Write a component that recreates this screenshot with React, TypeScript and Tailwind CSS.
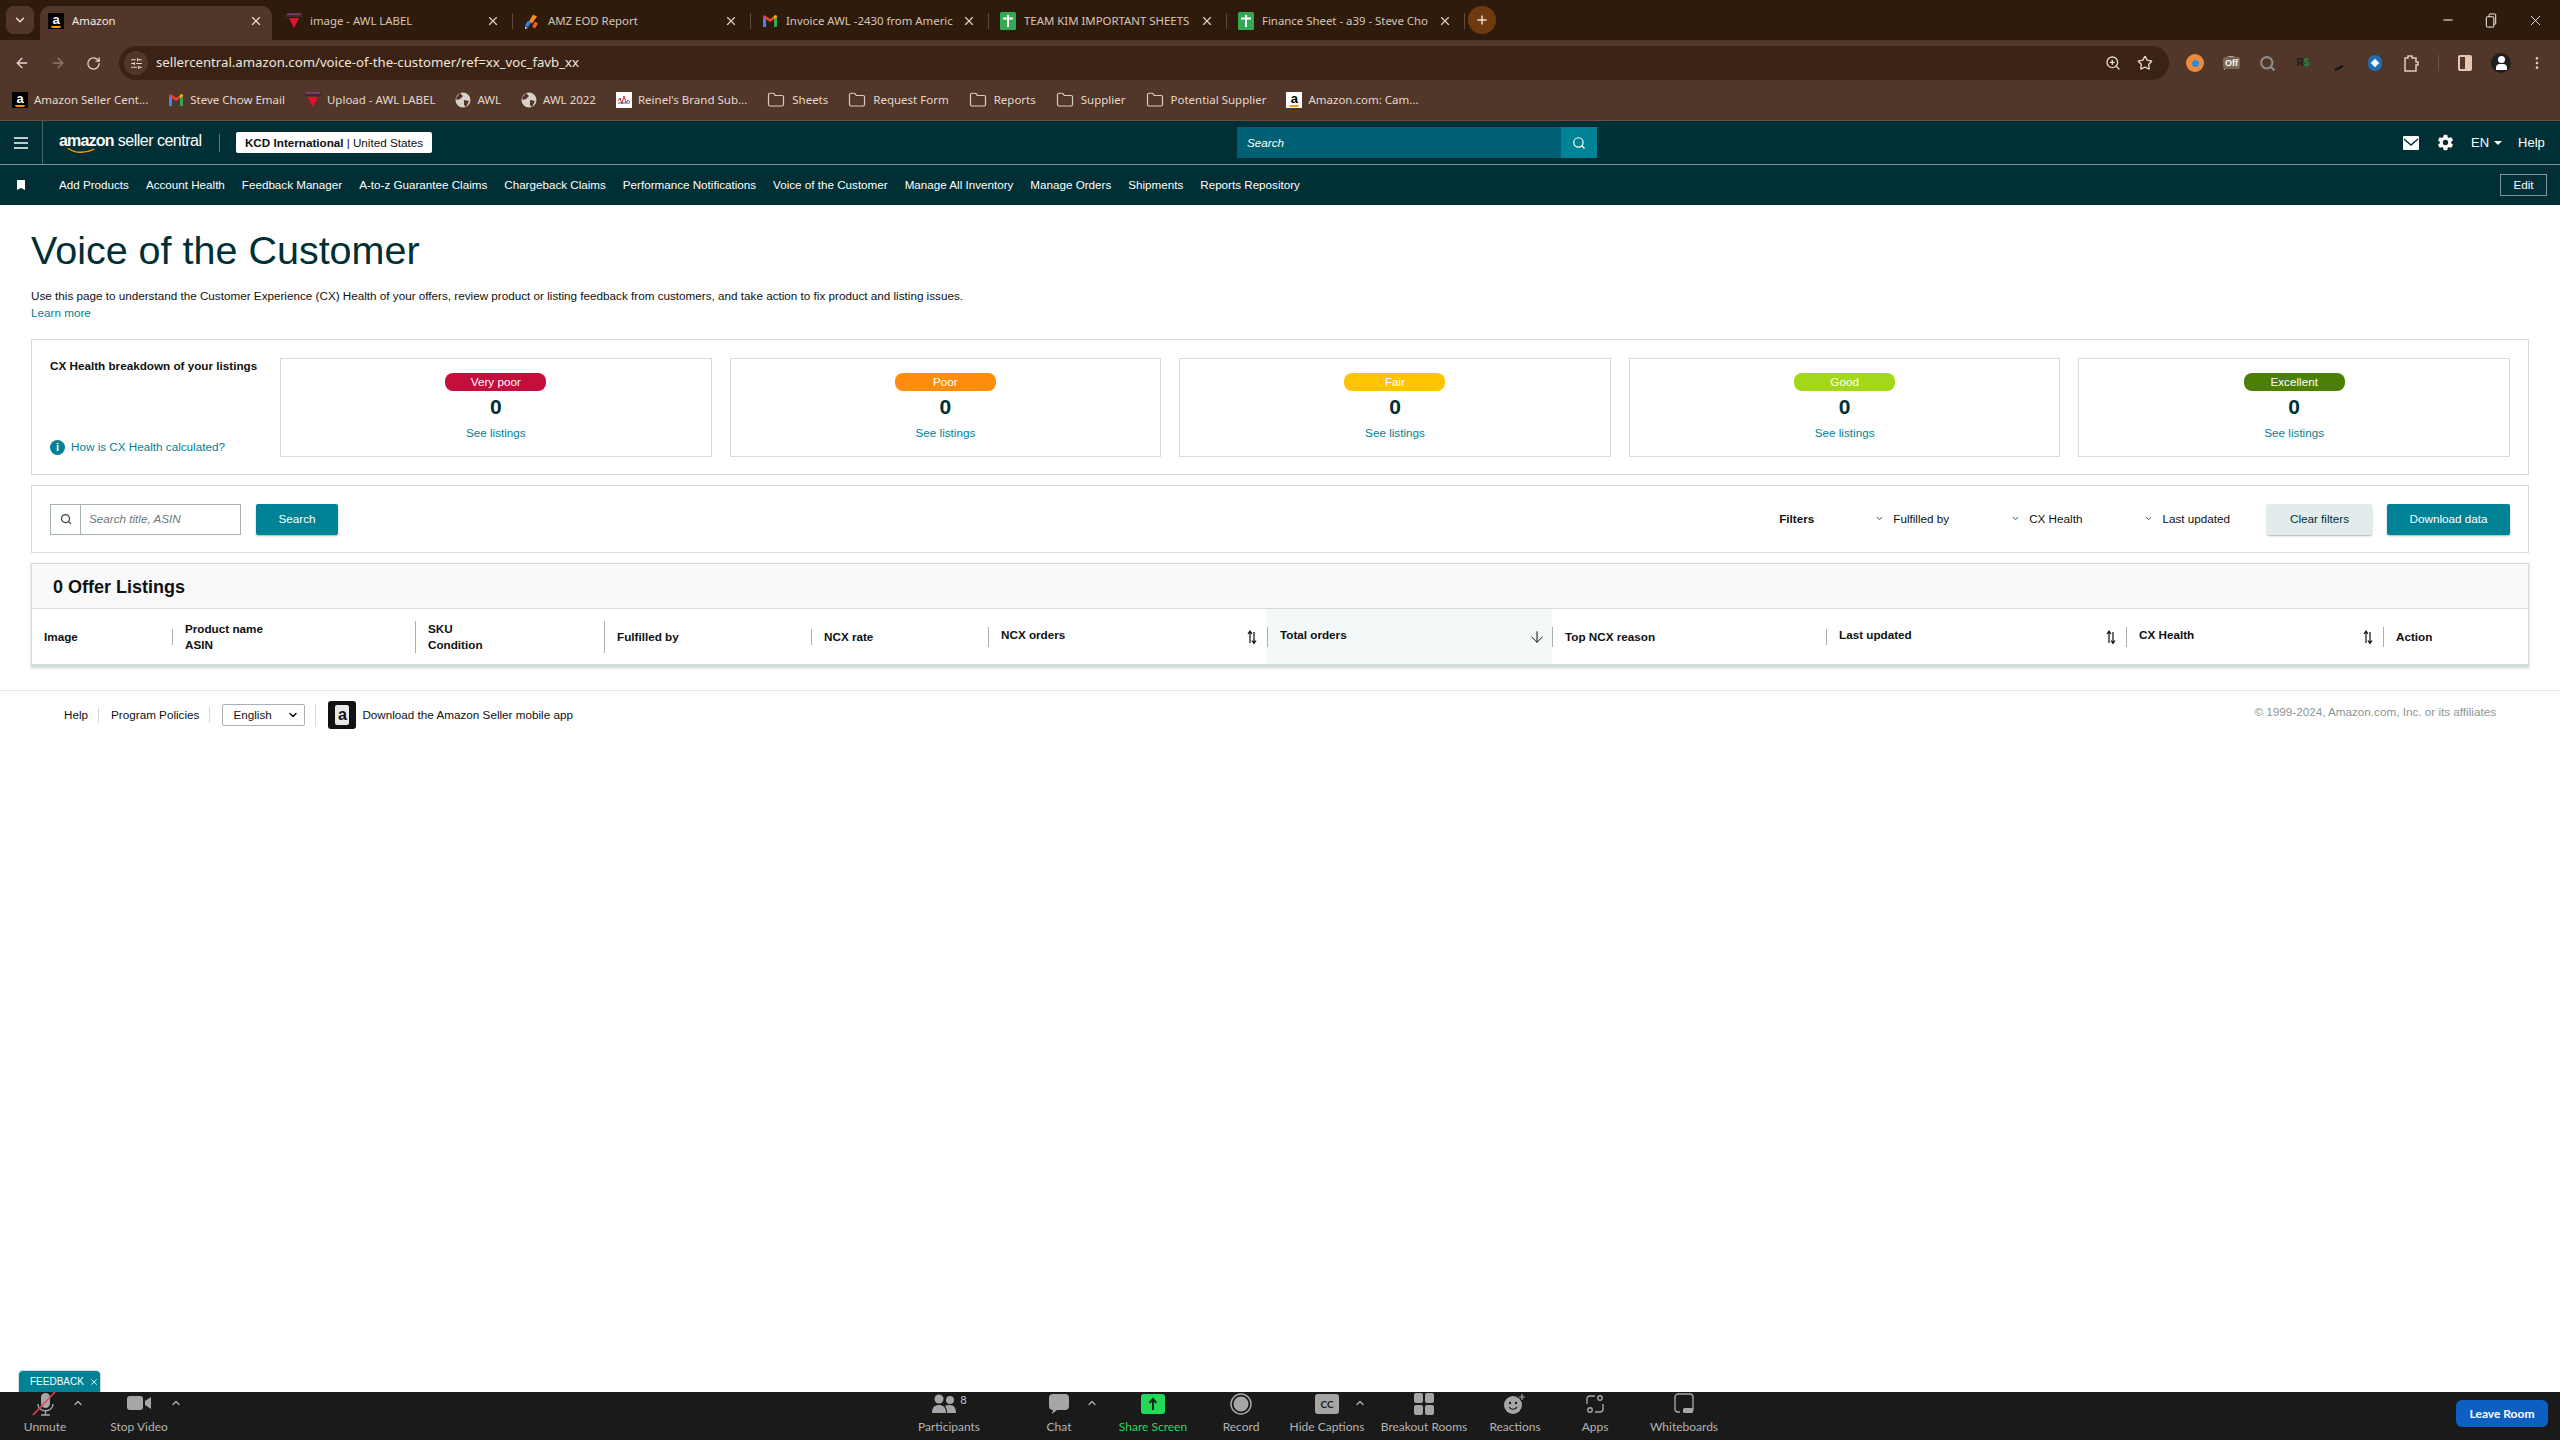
import React from 'react';
import {
  ArrowDown,
  ArrowLeft,
  ArrowRight,
  ChevronDown,
  ChevronUp,
  EllipsisVertical,
  Folder,
  Minus,
  Plus,
  RotateCw,
  Search,
  SlidersHorizontal,
  Star,
  X,
  ZoomIn,
} from 'lucide-react';
import { IoSettingsSharp } from 'react-icons/io5';

const AmazonIcon = ({ light = false }: { light?: boolean }) => (
  <span
    className={`relative inline-flex h-[16px] w-[16px] shrink-0 justify-center overflow-hidden font-['Liberation_Sans',sans-serif] text-[13px] font-bold leading-[14px] ${
      light ? 'bg-white text-black' : 'bg-black text-white'
    }`}
  >
    a
    <span className="absolute bottom-[1px] left-[3px] h-[2px] w-[10px] rounded-b-full bg-[#f90]" />
  </span>
);

const GmailIcon = () => (
  <svg viewBox="0 0 16 16" className="h-[16px] w-[16px] shrink-0">
    <path d="M1 14V4l3 2v8z" fill="#4285f4" />
    <path d="M12 14V6l3-2v10z" fill="#34a853" />
    <path d="M1 4c0-2 2-2 3-1l4 3 4-3c1-1 3-1 3 1l-7 5z" fill="#ea4335" />
    <path d="M12 6l3-2c0-2-2-2-3-1z" fill="#fbbc04" />
  </svg>
);

const AwlIcon = () => (
  <svg viewBox="0 0 16 16" className="h-[16px] w-[16px] shrink-0">
    <rect x="0" y="1" width="16" height="3" fill="#3b2a3a" />
    <path d="M3 5h10l-5 10z" fill="#e8112d" />
    <path d="M1 1h14" stroke="#b84a9a" strokeWidth="1" />
  </svg>
);

const ReportIcon = () => (
  <svg viewBox="0 0 16 16" className="h-[17px] w-[16px] shrink-0">
    <path d="M9 1l4 2-5 7-3-2z" fill="#f68b1f" />
    <path d="M4 7l3 2-3 5-3-2z" fill="#2f80ed" />
    <path d="M11 8l3 2-3 5-3-2z" fill="#f15a24" />
    <path d="M1 13l3 2H1z" fill="#fff" />
  </svg>
);

const SheetsIcon = () => (
  <svg viewBox="0 0 16 18" className="h-[18px] w-[16px] shrink-0">
    <rect width="16" height="18" rx="1.5" fill="#34a853" />
    <path d="M3 6.5h10M8 3v12" stroke="#fff" strokeWidth="2" />
  </svg>
);

const GlobeIcon = () => (
  <svg viewBox="0 0 16 16" className="h-[16px] w-[16px] shrink-0">
    <circle cx="8" cy="8" r="7.5" fill="#d8d0ca" />
    <path d="M5 1l3 3-3 3-3 1-1-2zM9 8l5 1-3 6-2-2z" fill="#50372a" />
  </svg>
);

const ReinelIcon = () => (
  <svg viewBox="0 0 16 16" className="h-[18px] w-[16px] shrink-0">
    <rect width="16" height="16" fill="#fff" />
    <path d="M2 9l2-3 2 6 2-8 2 7 2-3 2 2" fill="none" stroke="#c33" strokeWidth="1" />
    <path d="M2 11h12" stroke="#36c" strokeWidth="1" />
  </svg>
);

const FolderIcon = () => <Folder className="mr-[1px] h-[18px] w-[18px] shrink-0 text-[#dccbbf]" strokeWidth={1.6} />;

const SortIcon = () => (
  <svg viewBox="0 0 10 16" className="h-[16px] w-[10px] shrink-0 text-[#0f1111]">
    <path d="M3 14V3M1 5l2-3 2 3" fill="none" stroke="currentColor" strokeWidth="1.2" />
    <path d="M7 3v11M5 11.5l2 3 2-3" fill="none" stroke="currentColor" strokeWidth="1.2" />
  </svg>
);

const tabs = [
  { title: 'image - AWL LABEL', icon: <AwlIcon /> },
  { title: 'AMZ EOD Report', icon: <ReportIcon /> },
  { title: 'Invoice AWL -2430 from Americ', icon: <GmailIcon /> },
  { title: 'TEAM KIM IMPORTANT SHEETS', icon: <SheetsIcon /> },
  { title: 'Finance Sheet - a39 - Steve Cho', icon: <SheetsIcon /> },
];

const bookmarks = [
  { name: 'Amazon Seller Cent...', icon: <AmazonIcon /> },
  { name: 'Steve Chow Email', icon: <GmailIcon /> },
  { name: 'Upload - AWL LABEL', icon: <AwlIcon /> },
  { name: 'AWL', icon: <GlobeIcon /> },
  { name: 'AWL 2022', icon: <GlobeIcon /> },
  { name: "Reinel's Brand Sub...", icon: <ReinelIcon /> },
  { name: 'Sheets', icon: <FolderIcon /> },
  { name: 'Request Form', icon: <FolderIcon /> },
  { name: 'Reports', icon: <FolderIcon /> },
  { name: 'Supplier', icon: <FolderIcon /> },
  { name: 'Potential Supplier', icon: <FolderIcon /> },
  { name: 'Amazon.com: Cam...', icon: <AmazonIcon light /> },
];

const navItems = [
  'Add Products',
  'Account Health',
  'Feedback Manager',
  'A-to-z Guarantee Claims',
  'Chargeback Claims',
  'Performance Notifications',
  'Voice of the Customer',
  'Manage All Inventory',
  'Manage Orders',
  'Shipments',
  'Reports Repository',
];

const healthCards = [
  { label: 'Very poor', color: 'bg-[#c40f3c]' },
  { label: 'Poor', color: 'bg-[#ff8c0a]' },
  { label: 'Fair', color: 'bg-[#ffc400]' },
  { label: 'Good', color: 'bg-[#a2d819]' },
  { label: 'Excellent', color: 'bg-[#4b7f06]' },
];

const columns = [
  { key: 'image', width: 'w-[140px]', lines: ['Image'], divider: '' },
  { key: 'product', width: 'w-[243px]', lines: ['Product name', 'ASIN'], divider: 'h-[16px]' },
  { key: 'sku', width: 'w-[189px]', lines: ['SKU', 'Condition'], divider: 'h-[32px]' },
  { key: 'fulfilled', width: 'w-[207px]', lines: ['Fulfilled by'], divider: 'h-[32px]' },
  { key: 'rate', width: 'w-[177px]', lines: ['NCX rate'], divider: 'h-[16px]' },
  { key: 'orders', width: 'w-[279px]', lines: ['NCX orders'], divider: 'h-[20px]', sort: true },
  { key: 'total', width: 'w-[285px]', lines: ['Total orders'], divider: 'h-[20px]', active: true },
  { key: 'reason', width: 'w-[274px]', lines: ['Top NCX reason'], divider: 'h-[20px]' },
  { key: 'updated', width: 'w-[300px]', lines: ['Last updated'], divider: 'h-[16px]', sort: true },
  { key: 'health', width: 'w-[257px]', lines: ['CX Health'], divider: 'h-[20px]', sort: true },
  { key: 'action', width: 'flex-1', lines: ['Action'], divider: 'h-[20px]' },
];

const GRAY = '#a6a6a6';

const zoomItems = [
  {
    label: 'Participants',
    width: 'w-[110px]',
    icon: (
      <span className="flex items-start gap-[3px]">
        <svg viewBox="0 0 26 20" className="h-[20px] w-[26px]">
          <circle cx="8" cy="5" r="4.5" fill={GRAY} />
          <circle cx="19" cy="6" r="4" fill={GRAY} />
          <path d="M1 19c0-6 3-8 7-8s7 2 7 8zM16 19c0-4-1-6-2-7 1-1 3-1 5-1 4 0 6 3 6 8z" fill={GRAY} />
        </svg>
        <span className="text-[11px] leading-[12px] text-[#c8c8c8]">8</span>
      </span>
    ),
  },
  {
    label: 'Chat',
    width: 'w-[110px]',
    chevron: 'left-[82px]',
    icon: (
      <svg viewBox="0 0 22 22" className="h-[22px] w-[22px]">
        <path d="M5 1h12a4 4 0 014 4v8a4 4 0 01-4 4H9l-5 4 1-4a4 4 0 01-4-4V5a4 4 0 014-4z" fill={GRAY} />
      </svg>
    ),
  },
  {
    label: 'Share Screen',
    width: 'w-[78px]',
    labelColor: 'text-[#23d959]',
    icon: (
      <svg viewBox="0 0 24 20" className="h-[20px] w-[24px]">
        <rect width="24" height="20" rx="3" fill="#23d959" />
        <path d="M12 16V6M8.5 9L12 5l3.5 4" fill="none" stroke="#0b2e12" strokeWidth="2" />
      </svg>
    ),
  },
  {
    label: 'Record',
    width: 'w-[98px]',
    icon: (
      <svg viewBox="0 0 22 22" className="h-[22px] w-[22px]">
        <circle cx="11" cy="11" r="10" fill="none" stroke={GRAY} strokeWidth="1.5" />
        <circle cx="11" cy="11" r="7.5" fill={GRAY} />
      </svg>
    ),
  },
  {
    label: 'Hide Captions',
    width: 'w-[74px]',
    chevron: 'left-[64px]',
    icon: (
      <span className="flex h-[20px] w-[24px] items-center justify-center rounded-[3px] bg-[#a6a6a6] text-[10px] font-bold leading-none text-[#1a1a1a]">
        CC
      </span>
    ),
  },
  {
    label: 'Breakout Rooms',
    width: 'w-[120px]',
    icon: (
      <svg viewBox="0 0 20 22" className="h-[22px] w-[20px]">
        <rect x="0" y="0" width="9" height="10" rx="2" fill={GRAY} />
        <rect x="11" y="0" width="9" height="10" rx="2" fill={GRAY} />
        <rect x="0" y="12" width="9" height="10" rx="2" fill={GRAY} />
        <rect x="11" y="12" width="9" height="10" rx="2" fill={GRAY} />
      </svg>
    ),
  },
  {
    label: 'Reactions',
    width: 'w-[62px]',
    icon: (
      <svg viewBox="0 0 24 22" className="h-[22px] w-[24px]">
        <circle cx="10" cy="12" r="9" fill={GRAY} />
        <circle cx="7" cy="10" r="1.2" fill="#1a1a1a" />
        <circle cx="13" cy="10" r="1.2" fill="#1a1a1a" />
        <path d="M6 14c2 3 6 3 8 0" fill="none" stroke="#1a1a1a" strokeWidth="1.2" />
        <path d="M19 1v6M16 4h6" stroke={GRAY} strokeWidth="1.2" />
      </svg>
    ),
  },
  {
    label: 'Apps',
    width: 'w-[98px]',
    icon: (
      <svg viewBox="0 0 18 20" fill="none" stroke={GRAY} strokeWidth="1.4" className="h-[20px] w-[18px]">
        <path d="M1 10V5a3 3 0 013-3h5M17 10v5a3 3 0 01-3 3H9" />
        <circle cx="14" cy="4" r="2.2" />
        <circle cx="4" cy="16" r="2.2" />
      </svg>
    ),
  },
  {
    label: 'Whiteboards',
    width: 'w-[80px]',
    icon: (
      <svg viewBox="0 0 20 22" className="h-[22px] w-[20px]">
        <path d="M6 19H4a3 3 0 01-3-3V4a3 3 0 013-3h12a3 3 0 013 3v12a3 3 0 01-3 3" fill="none" stroke={GRAY} strokeWidth="1.4" />
        <rect x="9" y="15" width="10" height="5" rx="1.5" fill={GRAY} />
      </svg>
    ),
  },
];

const ZoomLabel = ({ children, color = 'text-[#b3b3b3]' }: { children: string; color?: string }) => (
  <span className={`mt-[3px] whitespace-nowrap text-[12px] leading-[15px] ${color}`}>{children}</span>
);

const ToolbarBox = ({ children }: { children: React.ReactNode }) => (
  <span className="relative flex h-[36px] w-[36px] shrink-0 items-center justify-center">{children}</span>
);

export default function App() {
  return (
    <div className="flex h-screen w-full flex-col overflow-hidden bg-white font-['Liberation_Sans',Arial,sans-serif] text-[11.7px] text-[#0f1111]">
      {/* Browser tabs */}
      <div className="flex h-[40px] shrink-0 bg-[#2f1b0c] font-['Noto_Sans',sans-serif] text-[11.4px]">
        <button className="ml-[6px] mt-[6px] flex h-[28px] w-[28px] items-center justify-center rounded-lg bg-[#50372a] text-[#e8dcd3]">
          <ChevronDown className="h-[14px] w-[14px]" strokeWidth={2.5} />
        </button>
        <div className="ml-[6px] w-[238px] pt-[6px]">
          <div className="flex h-[34px] w-[232px] items-center rounded-t-[10px] bg-[#50372a] pb-[4px] pl-[8px] text-[#f3e9e2]">
            <AmazonIcon />
            <span className="ml-[8px]">Amazon</span>
            <X className="ml-auto mr-[9px] h-[14px] w-[14px]" />
          </div>
        </div>
        {tabs.map((tab) => (
          <div key={tab.title} className="mt-[6px] flex h-[34px] w-[238px] shrink-0 items-center pb-[4px] pl-[8px] text-[#d6c6ba]">
            {tab.icon}
            <span className="ml-[8px] w-[167px] whitespace-nowrap">{tab.title}</span>
            <X className="ml-[9px] h-[14px] w-[14px] text-[#e0d2c7]" />
            <span className="ml-[12px] h-[16px] w-px bg-[#5f4a3c]" />
          </div>
        ))}
        <button className="mt-[6px] flex h-[28px] w-[28px] items-center justify-center rounded-full bg-[#6e3a0e] text-[#f0dfd2]">
          <Plus className="h-[14px] w-[14px]" strokeWidth={2.5} />
        </button>
        <div className="ml-auto flex h-[40px] items-center text-white">
          <Minus className="mr-[30px] h-[14px] w-[14px]" />
          <svg viewBox="0 0 12 16" fill="none" stroke="currentColor" className="mr-[30px] h-[15px] w-[12px]">
            <rect x="1" y="4" width="8" height="11" rx="1" />
            <path d="M4 4V2a1 1 0 011-1h5a1 1 0 011 1v9a1 1 0 01-1 1H9" />
          </svg>
          <X className="mr-[16px] h-[17px] w-[17px]" strokeWidth={1.2} />
        </div>
      </div>

      {/* Address bar */}
      <div className="flex h-[40px] shrink-0 items-end bg-[#50372a] text-[#e5d8cf]">
        <div className="flex h-[34px] items-center">
          <ArrowLeft className="ml-[14px] h-[16px] w-[16px]" />
          <ArrowRight className="ml-[20px] h-[16px] w-[16px] text-[#8f7868]" />
          <RotateCw className="ml-[20px] h-[15px] w-[15px]" />
        </div>
        <div className="ml-[18px] flex h-[34px] w-[2050px] shrink-0 items-center rounded-full bg-[#3a2314] pl-[5px]">
          <span className="flex h-[24px] w-[24px] items-center justify-center rounded-full bg-[#50372a]">
            <SlidersHorizontal className="h-[13px] w-[13px]" />
          </span>
          <span className="ml-[8px] font-['Noto_Sans',sans-serif] text-[13.2px] text-[#f1e7df]">
            sellercentral.amazon.com/voice-of-the-customer/ref=xx_voc_favb_xx
          </span>
          <ZoomIn className="ml-auto h-[16px] w-[16px]" />
          <Star className="ml-[16px] mr-[16px] h-[16px] w-[16px]" />
        </div>
        <div className="ml-[8px] flex h-[34px] items-center">
          <ToolbarBox>
            <span className="flex h-[18px] w-[18px] items-center justify-center rounded-full bg-[#ef8a3c]">
              <span className="h-[7px] w-[7px] rounded-full bg-[#2b8fd6]" />
            </span>
          </ToolbarBox>
          <ToolbarBox>
            <span className="h-[14px] w-[14px] rounded-t-md border-l border-t border-[#b9aea6]" />
            <span className="absolute left-[10px] top-[12px] rounded-[2px] bg-[#7a6653] px-[2px] text-[9px] font-bold leading-[12px] text-white">
              Off
            </span>
          </ToolbarBox>
          <ToolbarBox>
            <Search className="h-[17px] w-[17px] text-[#8d8d8d]" strokeWidth={3} />
          </ToolbarBox>
          <ToolbarBox>
            <span className="text-[10px] font-bold leading-none text-[#1c1c1c]">
              R<span className="text-[#1d8a45]">$</span>
            </span>
          </ToolbarBox>
          <ToolbarBox>
            <svg viewBox="0 0 12 18" className="h-[18px] w-[12px]">
              <path d="M4 1l3 11" stroke="#4a3a30" />
              <path d="M2 16l8-4" stroke="#111" strokeWidth="2" />
            </svg>
          </ToolbarBox>
          <ToolbarBox>
            <span className="flex h-[16px] w-[14px] items-center justify-center rounded-full bg-[#1f6fb2]">
              <span className="h-[6px] w-[6px] rotate-45 bg-white" />
            </span>
          </ToolbarBox>
          <ToolbarBox>
            <svg viewBox="0 0 16 18" fill="none" stroke="#e5c9b3" strokeWidth="1.5" className="h-[18px] w-[16px]">
              <path d="M2 4h3V2h4v2h4v4h2v3h-2v6H2z" />
            </svg>
          </ToolbarBox>
          <span className="flex h-[36px] w-[18px] items-center justify-center">
            <span className="h-[16px] w-px bg-[#6f5647]" />
          </span>
          <ToolbarBox>
            <span className="flex h-[16px] w-[14px] rounded-[2px] border-2 border-[#e8c8b4]">
              <span className="ml-auto h-full w-[5px] bg-[#e8c8b4]" />
            </span>
          </ToolbarBox>
          <ToolbarBox>
            <span className="relative flex h-[20px] w-[20px] items-center justify-center overflow-hidden rounded-full bg-[#1f1f1f]">
              <span className="absolute top-[3px] h-[7px] w-[7px] rounded-full bg-white" />
              <span className="absolute top-[11px] h-[6px] w-[11px] rounded-t-sm bg-white" />
            </span>
          </ToolbarBox>
          <ToolbarBox>
            <EllipsisVertical className="h-[16px] w-[16px] text-[#e5c9b3]" />
          </ToolbarBox>
        </div>
      </div>

      {/* Bookmarks */}
      <div className="flex h-[41px] shrink-0 items-center gap-[20px] border-b border-[#6a4e3c] bg-[#50372a] pl-[12px] font-['Noto_Sans',sans-serif] text-[11.5px] text-[#e5d8cf]">
        {bookmarks.map((mark) => (
          <div key={mark.name} className="flex items-center gap-[6px] whitespace-nowrap">
            {mark.icon}
            <span>{mark.name}</span>
          </div>
        ))}
      </div>

      {/* Seller Central header */}
      <header className="flex h-[44px] shrink-0 items-center border-b border-[#7f9599] bg-[#002f36] text-white">
        <div className="flex h-full w-[43px] shrink-0 items-center justify-center border-r border-[#45666b]">
          <svg viewBox="0 0 14 12" className="h-[12px] w-[14px]">
            <path d="M0 1h14M0 6h14M0 11h14" stroke="#fff" strokeWidth="1.6" />
          </svg>
        </div>
        <div className="relative ml-[16px] flex w-[144px] items-baseline whitespace-nowrap pb-[3px]">
          <span className="text-[16px] font-bold leading-[20px] tracking-[-0.8px]">amazon</span>
          <span className="ml-[4px] text-[16px] leading-[20px] tracking-[-0.5px]">seller central</span>
          <svg viewBox="0 0 34 8" className="absolute left-[8px] top-[15px] h-[8px] w-[30px]">
            <path d="M1 2c8 6 20 6 30 1" fill="none" stroke="#f90" strokeWidth="1.6" />
          </svg>
        </div>
        <span className="ml-[16px] h-[18px] w-px bg-[#5a777b]" />
        <div className="ml-[16px] flex h-[21px] w-[196px] items-center justify-center whitespace-nowrap rounded-[2px] bg-white text-[#0f1111]">
          <span className="font-bold">KCD International</span>
          <span className="ml-[3px]">| United States</span>
        </div>
        <div className="ml-[805px] flex h-[31px] w-[360px] shrink-0">
          <div className="flex flex-1 items-center bg-[#006073] pl-[10px] italic text-white">Search</div>
          <div className="flex w-[36px] items-center justify-center bg-[#008296]">
            <Search className="h-[14px] w-[14px]" />
          </div>
        </div>
        <svg viewBox="0 0 16 14" className="ml-[806px] h-[14px] w-[16px] shrink-0">
          <rect width="16" height="14" rx="1" fill="#fff" />
          <path d="M1 3l7 6 7-6" fill="none" stroke="#002f36" strokeWidth="1.5" />
        </svg>
        <IoSettingsSharp className="ml-[18px] h-[17px] w-[17px] shrink-0" />
        <span className="ml-[17px] text-[13px]">EN</span>
        <span className="ml-[5px] h-0 w-0 border-x-[4px] border-t-[4px] border-x-transparent border-t-white" />
        <span className="ml-[16px] text-[13px]">Help</span>
      </header>

      {/* Favorites nav */}
      <nav className="flex h-[40px] shrink-0 items-center bg-[#002f36] text-white">
        <svg viewBox="0 0 8 10" className="ml-[17px] h-[10px] w-[8px] shrink-0">
          <path d="M0 0h8v10L4 8l-4 2z" fill="#fff" />
        </svg>
        <div className="ml-[34px] flex items-center gap-[17px] whitespace-nowrap text-[11.65px]">
          {navItems.map((item) => (
            <a key={item}>{item}</a>
          ))}
        </div>
        <button className="ml-auto mr-[13px] flex h-[22px] w-[47px] items-center justify-center border border-[#7f9599]">
          Edit
        </button>
      </nav>

      <main className="min-h-0 flex-1">
        <div className="px-[31px]">
          <h1 className="mt-[21px] h-[48px] text-[39.5px] font-normal leading-[48px] text-[#002f36]">Voice of the Customer</h1>
          <p className="mt-[13px] leading-[17px]">
            Use this page to understand the Customer Experience (CX) Health of your offers, review product or listing feedback from customers, and take action to fix product and listing issues.
          </p>
          <a className="block leading-[17px] text-[#008296]">Learn more</a>

          {/* CX Health breakdown */}
          <section className="mt-[18px] flex h-[136px] border border-[#d5dbdb] pl-[18px] pr-[18px] pt-[18px]">
            <div className="flex h-[99px] w-[230px] shrink-0 flex-col justify-between">
              <h2 className="pt-[1px] text-[11.7px] font-bold leading-[14px]">CX Health breakdown of your listings</h2>
              <a className="flex items-center gap-[6px] pb-[1px] text-[#008296]">
                <span className="flex h-[15px] w-[15px] items-center justify-center rounded-full bg-[#008296] text-[11px] font-bold leading-none text-white">
                  i
                </span>
                How is CX Health calculated?
              </a>
            </div>
            <div className="grid h-[99px] flex-1 grid-cols-5 gap-[18px]">
              {healthCards.map((card) => (
                <div key={card.label} className="flex flex-col items-center border border-[#d5dbdb] pt-[14px]">
                  <span className={`flex h-[18px] w-[101px] items-center justify-center rounded-[8px] leading-none text-white ${card.color}`}>
                    {card.label}
                  </span>
                  <span className="mt-[3px] text-[21px] font-bold leading-[26px] text-[#002f36]">0</span>
                  <a className="mt-[5px] leading-[16px] text-[#008296]">See listings</a>
                </div>
              ))}
            </div>
          </section>

          {/* Search and filters */}
          <section className="mt-[10px] flex h-[68px] items-center border border-[#d5dbdb] px-[18px]">
            <div className="flex h-[31px] w-[191px] border border-[#a6b2b2]">
              <span className="flex w-[30px] items-center justify-center border-r border-[#a6b2b2]">
                <Search className="h-[12px] w-[12px] text-[#33474a]" strokeWidth={2.5} />
              </span>
              <span className="flex items-center pl-[8px] italic text-[#6c7778]">Search title, ASIN</span>
            </div>
            <button className="ml-[15px] flex h-[31px] w-[82px] items-center justify-center rounded-[2px] bg-[#008296] text-white shadow-[0_1px_2px_rgba(0,0,0,0.3)]">
              Search
            </button>
            <span className="ml-auto font-bold">Filters</span>
            {['Fulfilled by', 'CX Health', 'Last updated'].map((filter, i) => (
              <span key={filter} className={`flex items-center gap-[9px] ${i === 0 ? 'ml-[61px]' : 'ml-[62px]'}`}>
                <ChevronDown className="h-[9px] w-[9px] text-[#33474a]" strokeWidth={2.5} />
                {filter}
              </span>
            ))}
            <button className="ml-[37px] flex h-[31px] w-[105px] items-center justify-center rounded-[2px] bg-[#e3ecec] text-[#002f36] shadow-[0_1px_2px_rgba(0,0,0,0.3)]">
              Clear filters
            </button>
            <button className="ml-[15px] flex h-[31px] w-[123px] items-center justify-center rounded-[2px] bg-[#008296] text-white shadow-[0_1px_2px_rgba(0,0,0,0.3)]">
              Download data
            </button>
          </section>

          {/* Listings table */}
          <section className="mt-[10px] border border-b-[3px] border-[#d5dbdb] shadow-[0_1px_3px_rgba(0,0,0,0.2)]">
            <div className="flex h-[45px] items-center border-b border-[#d5dbdb] bg-[#f9f9f9] pl-[21px] pt-[1px]">
              <h2 className="text-[18px] font-bold leading-none text-[#0f1111]">0 Offer Listings</h2>
            </div>
            <div className="flex h-[55px]">
              {columns.map((col) => (
                <div
                  key={col.key}
                  className={`flex shrink-0 items-center whitespace-nowrap font-bold ${col.width} ${col.active ? 'bg-[#f3f8f8]' : ''}`}
                >
                  {col.divider ? <span className={`w-px shrink-0 bg-[#a6b2b2] ${col.divider}`} /> : null}
                  <div className={`ml-[12px] leading-[16px] ${col.sort || col.active ? 'mb-[4px]' : ''}`}>
                    {col.lines.map((line) => (
                      <div key={line}>{line}</div>
                    ))}
                  </div>
                  {col.sort ? (
                    <span className="ml-auto mr-[10px]">
                      <SortIcon />
                    </span>
                  ) : null}
                  {col.active ? <ArrowDown className="ml-auto mr-[6px] h-[18px] w-[18px] shrink-0" strokeWidth={1.3} /> : null}
                </div>
              ))}
            </div>
          </section>
        </div>

        {/* Page footer */}
        <footer className="mt-[23px] flex h-[50px] border-t border-[#e3e6e6] pl-[64px] pr-[64px] pt-[13px]">
          <div className="flex h-[22px] items-center">
            <a>Help</a>
            <span className="ml-[10px] h-[16px] w-px bg-[#d5dbdb]" />
            <a className="ml-[12px]">Program Policies</a>
            <span className="ml-[10px] h-[16px] w-px bg-[#d5dbdb]" />
            <span className="ml-[12px] flex h-[22px] w-[83px] items-center justify-between rounded-[2px] border border-[#a6b2b2] pl-[10px] pr-[5px]">
              English
              <ChevronDown className="h-[12px] w-[12px]" strokeWidth={3} />
            </span>
            <span className="ml-[10px] h-[22px] w-px bg-[#d5dbdb]" />
            <span className="relative ml-[12px] flex h-[28px] w-[28px] items-center justify-center rounded-[3px] bg-[#111] text-[16px] font-bold leading-none text-white">
              <span className="flex h-[20px] w-[14px] items-center justify-center rounded-[2px] bg-[#e8e8e8] text-[#111]">a</span>
            </span>
            <a className="ml-[6px]">Download the Amazon Seller mobile app</a>
          </div>
          <span className="ml-auto leading-[16px] text-[#8b9596]">© 1999-2024, Amazon.com, Inc. or its affiliates</span>
        </footer>
      </main>

      {/* Zoom meeting bar */}
      <div className="relative flex h-[48px] shrink-0 bg-[#1a1a1a] font-['Lato',sans-serif]">
        <div className="absolute bottom-[48px] left-[18px] flex h-[22px] w-[83px] items-center rounded-t-[5px] border border-b-0 border-[#d5dbdb] bg-[#008296] pl-[11px] font-['Liberation_Sans',sans-serif] text-[10px] text-white">
          FEEDBACK
          <X className="ml-[5px] h-[10px] w-[10px] shrink-0" />
        </div>

        <div className="relative flex w-[90px] shrink-0 flex-col items-center">
          <svg viewBox="0 0 26 24" className="h-[24px] w-[26px]">
            <rect x="9" y="1" width="9" height="15" rx="4.5" fill={GRAY} />
            <path d="M6 12c0 9 15 9 15 0M13.5 19v4M9 23h9" fill="none" stroke={GRAY} strokeWidth="1.4" />
            <path d="M1 23L23 0" stroke="#e0484d" strokeWidth="1.5" />
          </svg>
          <ZoomLabel>Unmute</ZoomLabel>
          <ChevronUp className="absolute left-[72px] top-[5px] h-[12px] w-[12px] text-[#b3b3b3]" strokeWidth={2.5} />
        </div>
        <div className="relative flex w-[98px] shrink-0 flex-col items-center pt-[3px]">
          <svg viewBox="0 0 24 16" className="h-[16px] w-[24px]">
            <rect x="0" y="1" width="16" height="14" rx="3" fill={GRAY} />
            <path d="M18 6l6-4v12l-6-4z" fill={GRAY} />
          </svg>
          <span className="mt-[8px] whitespace-nowrap text-[12px] leading-[15px] text-[#b3b3b3]">Stop Video</span>
          <ChevronUp className="absolute left-[80px] top-[5px] h-[12px] w-[12px] text-[#b3b3b3]" strokeWidth={2.5} />
        </div>

        <div className="ml-[706px] flex">
          {zoomItems.map((item) => (
            <div key={item.label} className={`relative flex shrink-0 flex-col items-center ${item.width}`}>
              <div className="flex h-[24px] items-center">{item.icon}</div>
              <ZoomLabel color={item.labelColor}>{item.label}</ZoomLabel>
              {item.chevron ? (
                <ChevronUp className={`absolute top-[5px] h-[12px] w-[12px] text-[#b3b3b3] ${item.chevron}`} strokeWidth={2.5} />
              ) : null}
            </div>
          ))}
        </div>

        <button className="ml-auto mr-[12px] mt-[8px] flex h-[27px] w-[92px] items-center justify-center rounded-[6px] bg-[#0e5fc2] text-[12px] font-bold text-white">
          Leave Room
        </button>
      </div>
    </div>
  );
}
